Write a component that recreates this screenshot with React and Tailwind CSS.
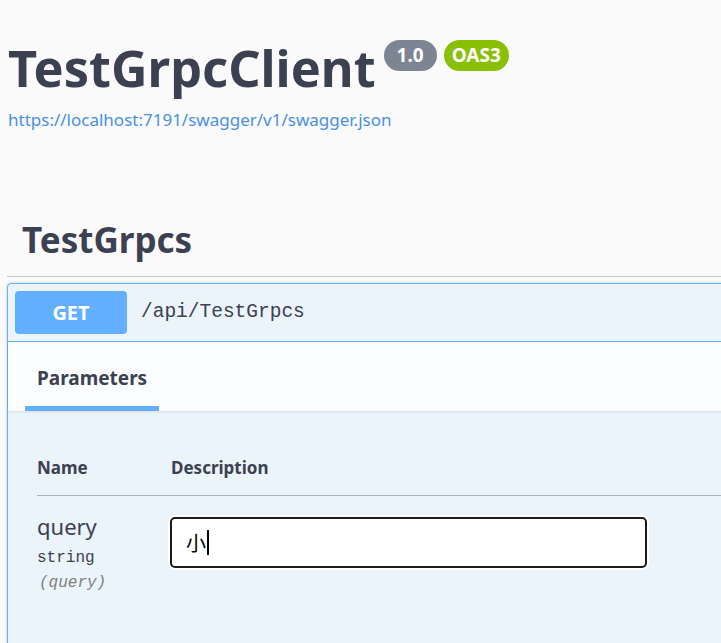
export default function App() {
  return (
    <div className="min-h-screen w-[721px] overflow-hidden bg-[#fafafa] font-['Noto_Sans','Noto_Sans_CJK_SC',sans-serif] text-[#3b4151]">
      {/* info */}
      <div className="pl-2 pt-[32px]">
        <div className="flex items-start">
          <h2 className="text-[50.5px] font-bold leading-[72px] text-[#3b4151]">TestGrpcClient</h2>
          <div className="ml-[8px] mt-[8px] flex gap-[7px]">
            <span className="flex h-[31px] items-center rounded-[16px] bg-[#7d8492] px-[13px] text-[19px] font-bold text-white">1.0</span>
            <span className="flex h-[31px] items-center rounded-[16px] bg-[#89bf04] px-[8px] text-[19px] font-bold text-white">OAS3</span>
          </div>
        </div>
        <a className="mt-[4px] block text-[17px] leading-[24px] text-[#4990e2]">https://localhost:7191/swagger/v1/swagger.json</a>
      </div>

      {/* tag */}
      <div className="mt-[84px] pl-[7px]">
        <h3 className="border-b border-[#c4c6cb] pb-[12px] pl-[15px] text-[35px] font-bold leading-[48px]">TestGrpcs</h3>

        <div className="mt-[6px] w-[730px] rounded-[4px] border border-[#61affe] bg-[#ebf3fb] shadow-[0_0_3px_rgba(0,0,0,0.19)]">
          <div className="flex items-center border-b border-[#61affe] p-[7px]">
            <span className="flex h-[43px] w-[112px] items-center justify-center rounded-[4px] bg-[#61affe] text-[20px] font-bold text-white">GET</span>
            <span className="ml-[14px] font-['Liberation_Mono',monospace] text-[19.5px] text-[#3b4151]">/api/TestGrpcs</span>
          </div>

          <div className="bg-[#fcfdfe] px-[17px] shadow-[0_1px_2px_rgba(0,0,0,0.1)]">
            <div className="inline-block border-b-[5px] border-[#61affe] px-[12px] pb-[14px] pt-[22px] text-[19px] font-bold leading-[28px]">Parameters</div>
          </div>

          <div className="pb-[80px] pl-[29px] pr-0 pt-[45px]">
            <div className="flex border-b border-[#aab0bd] pb-[15px] text-[17px] font-bold leading-[24px]">
              <div className="w-[134px]">Name</div>
              <div>Description</div>
            </div>
            <div className="flex pt-[16px]">
              <div className="w-[133px]">
                <div className="text-[22px] leading-[28px]">query</div>
                <div className="mt-[7px] font-['Liberation_Mono',monospace] text-[16px] leading-[22px]">string</div>
                <div className="mt-[3px] pl-[2px] font-['Liberation_Mono',monospace] text-[16px] italic leading-[22px] text-[#808080]">(query)</div>
              </div>
              <div className="mt-[5px] flex h-[51px] w-[477px] items-center rounded-[5px] border-2 border-[#1b1b1b] bg-white px-[14px] shadow-[0_0_0_2px_#ffffff]">
                <span className="font-['Noto_Sans_CJK_SC',sans-serif] text-[20px] leading-none text-black">小</span>
                <span className="ml-[1px] h-[25px] w-[2px] bg-black"></span>
              </div>
            </div>
          </div>
        </div>
      </div>
    </div>
  );
}
